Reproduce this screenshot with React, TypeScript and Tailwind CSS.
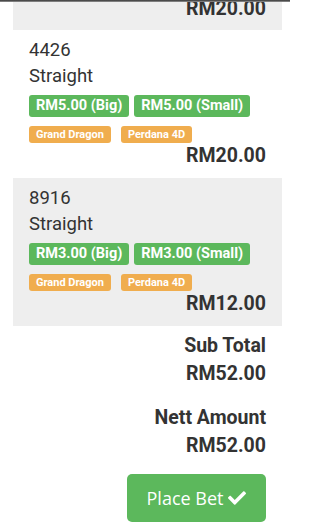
import React from "react";

type Item = { num: string; big: string; small: string; total: string; gray: boolean };

const items: Item[] = [
  { num: "4426", big: "RM5.00 (Big)", small: "RM5.00 (Small)", total: "RM20.00", gray: false },
  { num: "8916", big: "RM3.00 (Big)", small: "RM3.00 (Small)", total: "RM12.00", gray: true },
];

function Check() {
  return (
    <svg viewBox="0 0 512 512" className="w-[18px] h-[18px]" fill="currentColor">
      <path d="M173.898 439.404l-166.4-166.4c-9.997-9.997-9.997-26.206 0-36.204l36.203-36.204c9.997-9.998 26.207-9.998 36.204 0L192 312.69 432.095 72.596c9.997-9.997 26.207-9.997 36.204 0l36.203 36.204c9.997 9.997 9.997 26.206 0 36.204l-294.4 294.401c-9.998 9.997-26.207 9.997-36.204-.001z" />
    </svg>
  );
}

function BetItem({ it }: { it: Item }) {
  return (
    <div className={`${it.gray ? "bg-[#eeeeee]" : "bg-white"} px-[16px] pt-[7px] pb-[9px]`}>
      <div className="text-[18.5px] leading-[26px] text-[#333]">{it.num}</div>
      <div className="text-[18.5px] leading-[26px] text-[#333]">Straight</div>
      <div className="mt-[6px] flex gap-[5px]">
        <span className="h-[22px] px-[7px] rounded-[3px] bg-[#5cb85c] text-white font-bold text-[14.5px] leading-[22px]">{it.big}</span>
        <span className="h-[22px] px-[7px] rounded-[3px] bg-[#5cb85c] text-white font-bold text-[14.5px] leading-[22px]">{it.small}</span>
      </div>
      <div className="mt-[9px] flex gap-[10px]">
        <span className="h-[17px] px-[7px] rounded-[3px] bg-[#f0ad4e] text-white font-bold text-[11px] leading-[17px]">Grand Dragon</span>
        <span className="h-[17px] px-[7px] rounded-[3px] bg-[#f0ad4e] text-white font-bold text-[11px] leading-[17px]">Perdana 4D</span>
      </div>
      <div className="text-right font-bold text-[19.5px] leading-[26px] text-[#333]">{it.total}</div>
    </div>
  );
}

export default function App() {
  return (
    <div className="relative w-[290px] h-[526px] overflow-hidden bg-white font-['Roboto',sans-serif]">
      <div className="pl-[13px] pr-[8px]">
        <div className="flex flex-col bg-[#eeeeee] px-[16px] h-[30px]">
          <div className="-mt-[4px] text-right font-bold text-[19.5px] leading-[26px] text-[#333]">RM20.00</div>
        </div>
        {items.map((it) => (
          <BetItem key={it.num} it={it} />
        ))}
        <div className="px-[16px] text-right font-bold text-[19.5px] leading-[28px] text-[#333]">
          <div className="mt-[6px]">Sub Total</div>
          <div>RM52.00</div>
          <div className="mt-[16px]">Nett Amount</div>
          <div>RM52.00</div>
        </div>
        <div className="px-[16px] mt-[14px] flex justify-end">
          <button className="w-[139px] h-[48px] rounded-[5px] bg-[#5cb85c] text-white flex items-center justify-center gap-[5px] font-['Open_Sans',sans-serif] text-[18px]">
            <span>Place Bet</span>
            <Check />
          </button>
        </div>
      </div>
      <div className="absolute top-0 left-0 right-0 h-[2px] bg-gradient-to-b from-[#333] to-[#999]" />
    </div>
  );
}
